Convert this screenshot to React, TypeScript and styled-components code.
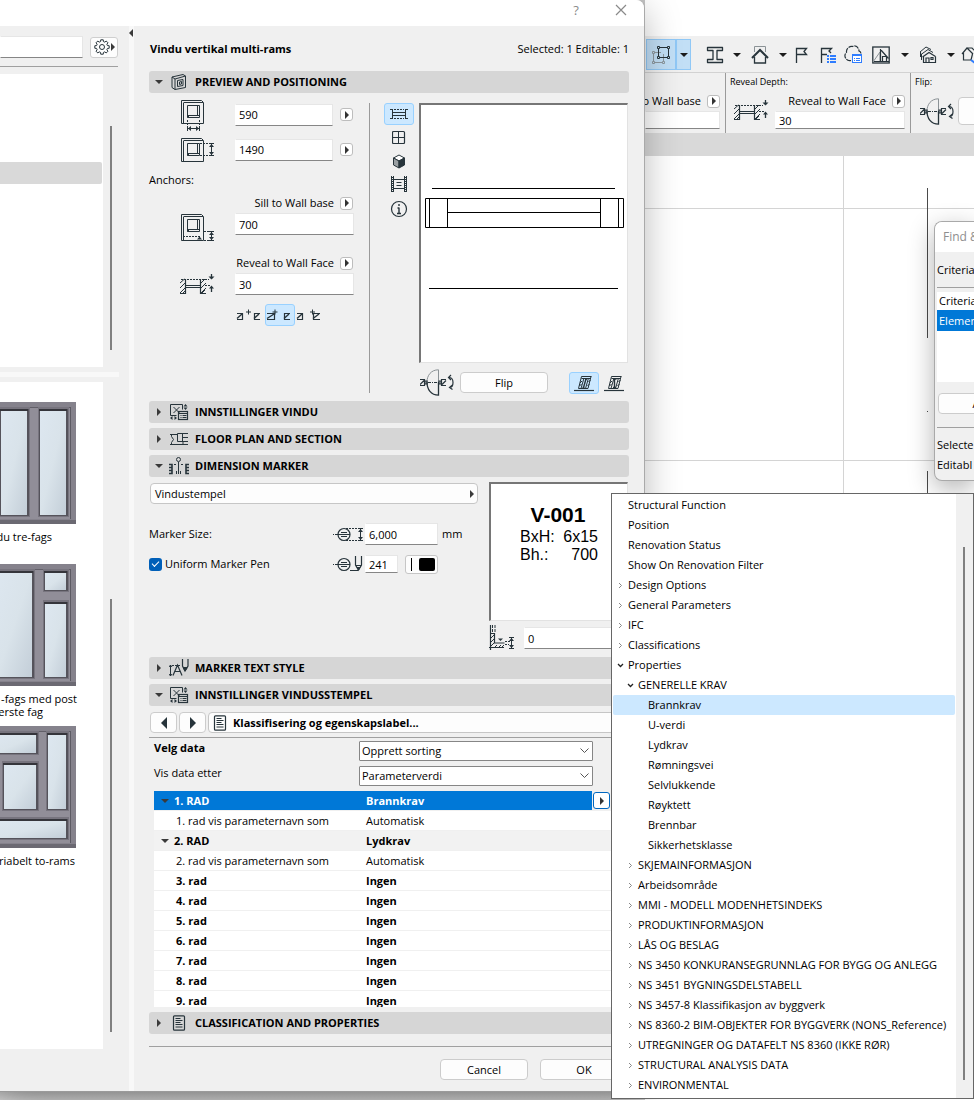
import React, { ReactNode } from "react";
import styled, { createGlobalStyle, css } from "styled-components";

const INK = "#27343b";
const BG = "#f0f0f0";

const GlobalStyle = createGlobalStyle`
  * { box-sizing: border-box; }
  body {
    margin: 0;
    background: #c4c4c4;
    font-family: "Open Sans", "Noto Sans", sans-serif;
    font-size: 11px;
    line-height: 14px;
    color: #000;
  }
  button, input, select { font: inherit; color: inherit; margin: 0; }
  button { padding: 0; }
  svg { display: block; flex: none; }
`;

/* ---------- windows ---------- */

const Screen = styled.div`
  position: relative;
  display: grid;
  grid-template-columns: minmax(645px, 1fr) 329px;
  min-height: 100vh;
  overflow: hidden;
  background: linear-gradient(#c4c4c4, #c4c4c4 1092px, #b8b8b8 1092px, #cdcdcd 1100px);
`;

const Dialog = styled.section`
  position: relative;
  z-index: 1;
  align-self: start;
  display: flex;
  flex-direction: column;
  background: ${BG};
  border-right: 1px solid #a9a9a9;
  border-bottom: 1px solid #9a9a9a;
  border-top-right-radius: 8px;
  box-shadow: 0 10px 36px rgba(0, 0, 0, 0.28);
`;

const TitleBar = styled.header`
  display: flex;
  justify-content: flex-end;
  gap: 25px;
  height: 26px;
  padding-right: 13px;
  background: #fff;
  border-top-right-radius: 8px;
`;

const TitleButton = styled.button`
  display: grid;
  place-items: center;
  width: 20px;
  height: 20px;
  border: 0;
  background: none;
  color: #8a8a8a;
  font-size: 13px;
`;

const DialogBody = styled.div`
  display: flex;
`;

const Sidebar = styled.aside`
  display: flex;
  flex-direction: column;
  flex: none;
  width: 129px;
`;

const SearchRow = styled.div`
  display: flex;
  justify-content: space-between;
  align-items: center;
  width: 118px;
  height: 41px;
  padding-top: 2px;
  border-bottom: 1px solid #a0a0a0;
`;

const GearButton = styled.button`
  display: flex;
  align-items: center;
  justify-content: center;
  gap: 1px;
  width: 28px;
  height: 21px;
  border: 1px solid #cfcfcf;
  border-radius: 3px;
  background: #fdfdfd;
`;

const ListPane = styled.div<{ $height?: number }>`
  display: flex;
  justify-content: space-between;
  width: 112px;
  ${(p) => (p.$height ? `height: ${p.$height}px;` : "flex: 1; margin-bottom: 42px;")}
`;

const Sheet = styled.div`
  width: 103px;
  overflow: hidden;
  background: #fff;
`;

const TreeSelection = styled.div`
  width: 102px;
  height: 22px;
  margin-top: 88px;
  border-radius: 0 2px 2px 0;
  background: #d9d9d9;
`;

const ScrollThumb = styled.div<{ $top: number; $bottom: number }>`
  width: 2px;
  margin: ${(p) => p.$top}px 0 ${(p) => p.$bottom}px;
  background: #808080;
`;

const PaneSplitter = styled.div`
  width: 119px;
  height: 5px;
  margin: 5px 0;
  background: #f8f8f8;
`;

const ColumnSplitter = styled.div`
  flex: none;
  width: 5px;
  background: #f8f8f8;
`;

const CollapseButton = styled.button`
  position: absolute;
  top: 29px;
  left: 129px;
  border: 0;
  background: none;
`;

const Thumb = styled.figure`
  height: 162px;
  margin: 0;
  svg { width: 76px; height: 122px; }
`;

const Caption = styled.figcaption<{ $end: number }>`
  display: flex;
  justify-content: flex-end;
  width: ${(p) => p.$end}px;
  line-height: 13px;
  white-space: nowrap;
`;

const Captions = styled.div`
  padding-top: 6px;
`;

const Content = styled.main`
  flex: 1;
  min-width: 0;
  padding: 0 15px 0 15px;
`;

const InfoRow = styled.div`
  display: flex;
  align-items: center;
  justify-content: space-between;
  height: 45px;
  padding-left: 1px;
`;

/* ---------- controls ---------- */

const SectionButton = styled.button`
  display: grid;
  grid-template-columns: 14px 26px 1fr;
  align-items: center;
  width: 100%;
  height: 22px;
  padding-left: 6px;
  border: 0;
  border-radius: 3px;
  background: #d6d6d6;
  font-weight: 700;
  text-align: left;
`;

const SectionGap = styled.div`
  height: 5px;
`;

const TextField = styled.input<{ $width?: number; $height?: number }>`
  ${(p) => (p.$width ? `width: ${p.$width}px;` : "flex: 1; min-width: 0; width: 100%;")}
  height: ${(p) => p.$height ?? 22}px;
  padding: 0 3px;
  border: 1px solid #e6e6e6;
  border-left-color: #fff;
  border-bottom-color: #868686;
  border-radius: 0;
  outline: 0;
  background: #fff;
`;

const ArrowButton = styled.button<{ $active?: boolean }>`
  display: grid;
  place-items: center;
  flex: none;
  width: ${(p) => (p.$active ? 17 : 13)}px;
  height: ${(p) => (p.$active ? 17 : 13)}px;
  border: 1px solid ${(p) => (p.$active ? "#0067c0" : "#bdbdbd")};
  border-radius: 3px;
  background: #fff;
`;

const PushButton = styled.button<{ $width?: number }>`
  display: flex;
  align-items: center;
  justify-content: center;
  flex: none;
  width: ${(p) => p.$width ?? 88}px;
  height: 21px;
  border: 1px solid #cccccc;
  border-radius: 4px;
  background: #fdfdfd;
`;

const WideButton = styled.button<{ $bold?: boolean }>`
  display: flex;
  align-items: center;
  flex: 1;
  gap: 7px;
  width: 100%;
  height: 21px;
  padding: 0 3px 0 4px;
  border: 1px solid #c6c6c6;
  border-radius: 4px;
  background: #fdfdfd;
  font-weight: ${(p) => (p.$bold ? 700 : 400)};
  > span { flex: 1; text-align: left; }
`;

const Toggle = styled.button<{ $on?: boolean; $tall?: boolean }>`
  display: grid;
  place-items: center;
  width: 30px;
  height: ${(p) => (p.$tall ? 24 : 22)}px;
  border: 1px solid ${(p) => (p.$on ? "#99d1ff" : "transparent")};
  border-radius: 3px;
  background: ${(p) => (p.$on ? "#cce8ff" : "transparent")};
`;

/* ---------- preview and positioning ---------- */

const PreviewBody = styled.div`
  display: flex;
  height: 308px;
`;

const FormColumn = styled.div`
  flex: none;
  width: 220px;
  padding-top: 4px;
`;

const Divider = styled.div`
  width: 1px;
  margin: 10px 0 8px;
  background: #9a9a9a;
`;

const SizeRow = styled.label`
  display: grid;
  grid-template-columns: 86px 98px 1fr;
  align-items: center;
  height: 35px;
  > svg { margin-left: 31px; }
  > button { margin-left: 7px; }
`;

const AnchorsLabel = styled.div`
  height: 26px;
  line-height: 26px;
`;

const AnchorGroup = styled.div<{ $height: number }>`
  display: grid;
  grid-template: 20px 22px / 86px 119px;
  height: ${(p) => p.$height}px;
  > svg { grid-area: 2 / 1; margin-left: 31px; }
  > input { grid-area: 2 / 2; }
`;

const AnchorLabel = styled.div`
  grid-area: 1 / 2;
  display: flex;
  align-items: center;
  justify-content: flex-end;
  gap: 6px;
  padding-right: 1px;
  white-space: nowrap;
`;

const ToggleRow = styled.div<{ $indent?: number }>`
  display: flex;
  margin-left: ${(p) => p.$indent ?? 0}px;
`;

const ViewTools = styled.div`
  display: flex;
  flex-direction: column;
  flex: none;
  padding: 10px 5px 0 14px;
`;

const PreviewColumn = styled.div`
  flex: 1;
  min-width: 0;
  padding-top: 10px;
`;

const SunkenFrame = styled.div<{ $height: number }>`
  height: ${(p) => p.$height}px;
  margin-right: 1px;
  border: solid #767676;
  border-width: 2px 1px 1px 2px;
  border-right-color: #e2e2e2;
  border-bottom-color: #e2e2e2;
  background: #fff;
  overflow: hidden;
  > svg { width: 100%; height: 100%; }
`;

const FlipRow = styled.div`
  display: flex;
  align-items: center;
  height: 27px;
  margin-top: 6px;
  padding-left: 1px;
  > svg { margin-right: 5px; }
  > div { margin-left: auto; }
`;

/* ---------- dimension marker ---------- */

const MarkerBody = styled.div`
  display: flex;
  gap: 11px;
  height: 180px;
  padding-top: 5px;
`;

const MarkerForm = styled.div`
  flex: 1;
  padding: 1px 0 15px 1px;
  > button { margin-bottom: 15px; }
`;

const MarkerRow = styled.div`
  display: flex;
  align-items: center;
  height: 30px;
  margin-left: -1px;
  > label:first-child { display: flex; align-items: center; gap: 3px; width: 184px; }
`;

const CheckBox = styled.input`
  display: grid;
  place-items: center;
  appearance: none;
  width: 13px;
  height: 13px;
  border-radius: 3px;
  background: #005fb8;
  &::after {
    content: "";
    width: 6px;
    height: 3px;
    margin-top: -2px;
    border: solid #fff;
    border-width: 0 0 1px 1px;
    transform: rotate(-45deg);
  }
`;

const Unit = styled.span`
  margin-left: 4px;
`;

const PenButton = styled.button`
  display: flex;
  align-items: center;
  gap: 7px;
  width: 33px;
  height: 19px;
  margin-left: 7px;
  padding: 0 2px 0 5px;
  border: 1px solid #c6c6c6;
  border-radius: 3px;
  background: #fdfdfd;
`;

const PenLine = styled.span`
  width: 1px;
  height: 13px;
  background: #000;
`;

const PenColor = styled.span`
  flex: 1;
  height: 13px;
  border-radius: 2px;
  background: #000;
`;

const MarkerSide = styled.div`
  flex: none;
  width: 140px;
`;

const StampText = styled.div`
  padding: 18px 0 0 29px;
  font-family: "Liberation Sans", Arial, sans-serif;
  font-size: 16px;
  line-height: 18px;
`;

const StampTitle = styled.div`
  width: 76px;
  padding-bottom: 1px;
  font-size: 21px;
  line-height: 25px;
  font-weight: 700;
  text-align: center;
`;

const StampLine = styled.div`
  display: flex;
  justify-content: space-between;
  width: 78px;
`;

const SillRow = styled.label`
  display: flex;
  align-items: center;
  gap: 9px;
  height: 28px;
  margin-top: 3px;
  padding-right: 1px;
`;

/* ---------- stamp settings ---------- */

const NavRow = styled.div`
  display: flex;
  gap: 2px;
  height: 32px;
  padding: 6px 1px 0;
  border-bottom: 1px solid #a0a0a0;
`;

const OptionRow = styled.div<{ $bold?: boolean }>`
  display: flex;
  align-items: flex-start;
  height: 25px;
  padding-left: 5px;
  > label {
    width: 205px;
    line-height: 20px;
    font-weight: ${(p) => (p.$bold ? 700 : 400)};
  }
`;

const SelectBox = styled.div`
  position: relative;
  width: 234px;
  margin-top: 3px;
  > svg { position: absolute; top: 7px; right: 4px; pointer-events: none; }
`;

const Select = styled.select`
  appearance: none;
  display: block;
  width: 100%;
  height: 20px;
  padding: 0 2px;
  border: 1px solid #868686;
  border-radius: 1px;
  background: #fff;
`;

const TableFrame = styled.div`
  height: 216px;
  margin: 3px 1px 0 5px;
  overflow: hidden;
`;

const Table = styled.table`
  width: 100%;
  table-layout: fixed;
  border-spacing: 0;
`;

const KeyCol = styled.col`
  width: 212px;
`;
const ValueCol = styled.col`
  width: 226px;
`;

const Row = styled.tr<{ $kind: "selected" | "group" | "plain"; $bold: boolean }>`
  height: 20px;
  font-weight: ${(p) => (p.$bold ? 700 : 400)};
  td {
    height: 20px;
    padding: 0;
    line-height: 19px;
    border-bottom: 1px solid #f0f0f0;
    background: ${(p) => (p.$kind === "group" ? "#f2f2f2" : "#fff")};
    ${(p) =>
      p.$kind === "selected" &&
      css`
        color: #fff;
        background: #0078d7;
        &:last-child { background: ${BG}; padding-left: 1px; }
      `}
  }
`;

const KeyCell = styled.div<{ $indent?: boolean }>`
  display: flex;
  align-items: center;
  gap: 5px;
  padding-left: ${(p) => (p.$indent ? 22 : 7)}px;
`;

const Footer = styled.footer`
  display: flex;
  justify-content: flex-end;
  gap: 12px;
  height: 45px;
  margin-top: 12px;
  padding: 12px 1px 0 0;
  border-top: 1px solid #a0a0a0;
`;

/* ---------- drawing application behind the dialog ---------- */

const AppWindow = styled.section`
  display: flex;
  flex-direction: column;
  min-width: 0;
  overflow: hidden;
  padding-top: 36px;
  background: #fff;
`;

const ToolStrip = styled.div`
  display: flex;
  align-items: center;
  height: 37px;
  padding: 1px 0 0 1px;
  background: ${BG};
  border-bottom: 1px solid #d2d2d2;
`;

const Tool = styled.button<{ $w: number; $on?: boolean }>`
  display: grid;
  place-items: center;
  flex: none;
  width: ${(p) => p.$w}px;
  height: 31px;
  overflow: hidden;
  border: ${(p) => (p.$on ? "1px solid #90c8f6" : "0")};
  background: ${(p) => (p.$on ? "#c2dff6" : "none")};
`;

const StripRule = styled.div`
  width: 1px;
  height: 28px;
  margin: 0 11px 0 2px;
  background: #9a9a9a;
`;

const InfoBar = styled.div`
  display: flex;
  height: 60px;
  background: ${BG};
`;

const InfoCell = styled.div<{ $w?: number }>`
  display: grid;
  align-content: start;
  flex: ${(p) => (p.$w ? "none" : "1")};
  ${(p) => p.$w && `width: ${p.$w}px;`}
  overflow: hidden;
  border-right: ${(p) => (p.$w ? "1px solid #9a9a9a" : "0")};
`;

const InfoTitle = styled.div`
  height: 18px;
  padding-left: 4px;
  font-size: 9px;
  line-height: 18px;
`;

const InfoControls = styled.div`
  display: grid;
  grid-template-columns: auto minmax(0, 1fr);
  gap: 5px;
  padding: 0 5px 0 8px;
  > svg { align-self: center; }
`;

const InfoStack = styled.div`
  display: flex;
  flex-direction: column;
  min-width: 0;
  > input { flex: none; }
`;

const InfoLabel = styled.div`
  display: flex;
  align-items: center;
  justify-content: flex-end;
  gap: 6px;
  height: 20px;
  white-space: nowrap;
`;

const InfoLabelEnd = styled(InfoLabel)`
  width: 75px;
`;

const FlipControls = styled.div`
  display: flex;
  align-items: center;
  gap: 3px;
  padding: 6px 0 0 9px;
`;

const FlipBox = styled(PushButton)`
  height: 28px;
`;

const TabBar = styled.div`
  height: 23px;
  background: #d9d9d9;
`;

const Canvas = styled.svg`
  width: 100%;
  height: 943px;
`;

const Palette = styled.section`
  position: absolute;
  z-index: 2;
  top: 221px;
  right: 0;
  width: 40px;
  overflow: hidden;
  border: 1px solid #a9a9a9;
  border-right: 0;
  border-radius: 8px 0 0 8px;
  background: ${BG};
  box-shadow: 0 8px 26px rgba(0, 0, 0, 0.3);
  white-space: nowrap;
`;

const PaletteTitle = styled.div`
  height: 30px;
  padding-left: 8px;
  background: #fff;
  color: #8e8e8e;
  font-size: 12px;
  line-height: 30px;
`;

const PaletteText = styled.div<{ $height: number }>`
  height: ${(p) => p.$height}px;
  padding-left: 2px;
  line-height: ${(p) => p.$height}px;
`;

const PaletteRule = styled.div`
  height: 1px;
  margin-left: 2px;
  background: #a0a0a0;
`;

const PaletteList = styled.div`
  height: 90px;
  margin: 4px 0 11px 2px;
  background: #fff;
`;

const PaletteItem = styled.div<{ $on?: boolean }>`
  height: ${(p) => (p.$on ? 21 : 18)}px;
  padding-left: 2px;
  line-height: ${(p) => (p.$on ? 21 : 18)}px;
  color: ${(p) => (p.$on ? "#fff" : "#000")};
  background: ${(p) => (p.$on ? "#0078d7" : "none")};
`;

const PaletteButton = styled.div`
  margin: 0 0 13px 3px;
`;

const PaletteStatus = styled.div`
  padding: 7px 0 5px;
`;

/* ---------- popup tree ---------- */

const Popup = styled.nav`
  position: absolute;
  z-index: 3;
  top: 493px;
  right: 0;
  display: flex;
  width: 363px;
  border: 1px solid #666;
  background: ${BG};
`;

const Tree = styled.ul`
  flex: 1;
  margin: 0;
  padding: 1px 1px 3px;
  list-style: none;
  background: #fff;
`;

const TreeButton = styled.button<{ $level: number; $on?: boolean }>`
  display: flex;
  align-items: center;
  gap: 4px;
  width: 100%;
  height: 20px;
  padding-left: ${(p) => 4 + p.$level * 10}px;
  border: 0;
  border-radius: 2px;
  background: ${(p) => (p.$on ? "#cce8ff" : "none")};
  text-align: left;
  white-space: nowrap;
`;

const LeafSpacer = styled.span`
  width: 7px;
`;

const PopupScroll = styled.div`
  width: 17px;
  padding: 53px 8px 18px 7px;
`;

const PopupThumb = styled.div`
  width: 2px;
  height: 100%;
  background: #808080;
`;

/* ---------- glyphs ---------- */

type Dir = "left" | "right" | "down";

const Tri = ({ dir, size = 4, fill = "#3a3a3a" }: { dir: Dir; size?: number; fill?: string }) => {
  const w = dir === "down" ? size * 2 : size;
  const h = dir === "down" ? size : size * 2;
  const d =
    dir === "down" ? `M0 0H${w}L${size} ${h}Z` : dir === "right" ? `M0 0V${h}L${w} ${size}Z` : `M${w} 0V${h}L0 ${size}Z`;
  return (
    <svg width={w} height={h} viewBox={`0 0 ${w} ${h}`} aria-hidden="true">
      <path d={d} fill={fill} />
    </svg>
  );
};

const Icon = ({ w, h, children, stroke = INK }: { w: number; h: number; children: ReactNode; stroke?: string }) => (
  <svg width={w} height={h} viewBox={`0 0 ${w} ${h}`} fill="none" stroke={stroke} aria-hidden="true">
    {children}
  </svg>
);

const Chevron = ({ open }: { open?: boolean }) => (
  <svg width="7" height="7" viewBox="0 0 7 7" fill="none" stroke={open ? "#222" : "#888"} aria-hidden="true">
    <path d={open ? "M1 2l2.500 2.500L6 2" : "M2 1l2.500 2.500L2 6"} strokeWidth={open ? 1.3 : 1} />
  </svg>
);

const SelectChevron = () => (
  <Icon w={9} h={6} stroke="#555">
    <path d="M.5.5l4 4 4-4" />
  </Icon>
);

const Frame = ({ h = 23 }: { h?: number }) => (
  <>
    <path d={`M1.500 1.500H21.500L23.500 3.500V${h + 1.5}H1.500ZM3.500 4V${h + 1}M3.500 3.500H23`} />
    <path d="M7.500 6.500H19.500V18.500H7.500ZM17.500 7V16.500M8 16.500H19M7.500 18.500l2-2" />
  </>
);

const VArrow = ({ x, y1, y2 }: { x: number; y1: number; y2: number }) => (
  <>
    <path d={`M${x} ${y1}V${y2}M${x - 2.5} ${y1}h5M${x - 2.5} ${y2}h5`} />
    <path
      d={`M${x - 2.5} ${y1 + 3.5}L${x} ${y1 + 0.5}L${x + 2.5} ${y1 + 3.5}ZM${x - 2.5} ${y2 - 3.5}L${x} ${y2 - 0.5}L${x + 2.5} ${y2 - 3.5}Z`}
      fill={INK}
      stroke="none"
    />
  </>
);

const WidthIcon = () => (
  <Icon w={36} h={32}>
    <Frame />
    <path d="M7.500 21v6M19.500 21v6" strokeDasharray="2 1" />
    <path d="M7.500 29.500h12M7.500 27v5M19.500 27v5" />
    <path d="M11 27L8 29.500l3 2.500zM16 27l3 2.500-3 2.500z" fill={INK} stroke="none" />
  </Icon>
);

const HeightIcon = () => (
  <Icon w={36} h={26}>
    <Frame />
    <path d="M20 6.500h11M20 18.500h11" strokeDasharray="2 1" />
    <VArrow x={31.5} y1={6.5} y2={18.5} />
  </Icon>
);

const SillIcon = () => (
  <Icon w={36} h={30}>
    <Frame h={26} />
    <path d="M3 23.500h18M24 18.500h8M24 27.500h8" strokeDasharray="2 1" />
    <path d="M17 26.500l2.500-3 2.500 3z" fill={INK} stroke="none" />
    <VArrow x={31.5} y1={18.5} y2={27.5} />
  </Icon>
);

const RevealIcon = () => (
  <Icon w={36} h={22}>
    <path d="M5.500 6v15M20.500 6v15" strokeWidth="1.200" />
    <path d="M0 10l4.500-4M0 15l5-5M0 20l5-5M2 21l3-3M21 10l4-4M21 15l5-5M21 20l5-5M21 21l4-4M0 20.500h5M21 20.500h5" />
    <path d="M6 12.500h14M6 14.500h14" />
    <path d="M1 6.500h28M25 12.500h5" strokeDasharray="2 1" />
    <path d="M31.500 1v4M31.500 15v4" strokeWidth="1.300" />
    <path d="M28.500 3.500h6l-3 3zM29 15.500h5l-2.500-3z" fill={INK} stroke="none" />
  </Icon>
);

/* Cut wall piece: the open side faces the window, on the left or the right. */
const Block = ({ x, w = 6, open = "left" }: { x: number; w?: number; open?: "left" | "right" }) => (
  <>
    <path
      d={`M${x} 8.500h${w}M${x} 14.500h${w}M${open === "left" ? x + w - 0.5 : x + 0.5} 8v7`}
      strokeWidth="1.200"
    />
    <path d={`M${x} 13.500l${w - 1}-4.500`} strokeWidth="1.400" />
  </>
);

const AnchorIcon = ({ a, plus, b, wa = 6, wb = 6 }: { a: number; plus: number; b: number; wa?: number; wb?: number }) => (
  <Icon w={28} h={20}>
    <Block x={a} w={wa} />
    <Block x={b} w={wb} open="right" />
    <path d={`M${plus} 4.500v5M${plus - 2.5} 7h5`} />
  </Icon>
);

const FlipIcon = () => (
  <Icon w={35} h={27}>
    <path d="M18.500 13V.8C11 .8 7 6.500 7 13" stroke="#8b9296" />
    <path d="M7 13c0 7.500 4 13.200 11.500 13.200V13" strokeWidth="1.300" />
    <path d="M8 13.500h11" strokeDasharray="3 1 1 1" />
    <path d="M0 10.500h4.500v6H0M0 15.500l4-4M5 12h2v3H5ZM26 10.500h-4.500v6h4.500M22 15.500l4-4M19 12h2v3h-2Z" strokeWidth="1.200" />
    <path d="M29 8.500c3 0 4 1.500 4 5s-1.500 5-3.500 5M31 6L28.500 8.500 31 11M32.500 16L29.500 18.500l3 2" strokeWidth="1.200" />
  </Icon>
);

const SlantIcon = ({ thick }: { thick?: boolean }) => (
  <Icon w={22} h={18}>
    <path d="M1 16.500h20" strokeWidth="1.200" />
    <path d="M5.500 14.500L8.500 2.500M8 14.500L11 4M12.500 14.500L15.500 4M15 14.500L18 2.500M5.500 14.500h9.500" />
    <path d={thick ? "M11.500 13.500V5M10 13.500h3M10.500 5h3" : "M10.500 13.500L13 5M9.500 13.500h2M12 5h2"} strokeWidth="1.400" />
    <path d="M8.500 2.500h10M8.500 4.500h9" />
    <path d="M6.500 12l2-2M7 9l2-2M14.500 12l2-2M15.500 8l2-2" />
  </Icon>
);

const PlanViewIcon = () => (
  <Icon w={20} h={12}>
    <path d="M1 1.500h3M1 10.500h3M16 1.500h3M16 10.500h3M3.500 1.500v9M16.500 1.500v9M4 4.500h12M4 7.500h12" />
    <path d="M5 1.500h10M5 10.500h10" strokeDasharray="2 1" />
  </Icon>
);
const ElevationIcon = () => (
  <Icon w={14} h={14}>
    <rect x=".5" y="1.500" width="12" height="12" rx="1" strokeWidth="1.200" />
    <path d="M6.500 2v12M1 7.500h12" />
  </Icon>
);
const CubeIcon = () => (
  <Icon w={14} h={15}>
    <path d="M7 1l5.500 3L7 7 1.500 4z" fill="#fff" />
    <path d="M1.500 4L7 7v7l-5.500-3z" fill="#9aa0a3" />
    <path d="M12.500 4L7 7v7l5.500-3z" fill={INK} />
  </Icon>
);
const FilmIcon = () => (
  <Icon w={18} h={18}>
    <path d="M1.500 0v16M3.500 0v16M14.500 0v16M16.500 0v16" />
    <path d="M2.500 1v15M15.500 1v15" strokeWidth="2" strokeDasharray="1 1" />
    <path d="M4 3.500h10M4 12.500h10M6.500 6.500h5M6.500 9.500h5" />
  </Icon>
);
const InfoIcon = () => (
  <Icon w={18} h={18}>
    <circle cx="9" cy="9" r="7.500" strokeWidth="1.200" />
    <path d="M9 4v2M9 7.500v6M7.500 8H9M7 13.500h4" strokeWidth="1.400" />
  </Icon>
);

/* Eight-toothed cog outline around the centre (8, 8). */
const cogPath = Array.from({ length: 8 }, (_, i) =>
  [
    [-15, 5.6],
    [-10, 7.3],
    [10, 7.3],
    [15, 5.6],
  ]
    .map(([offset, r]) => {
      const a = ((i * 45 + offset) * Math.PI) / 180;
      return `${(8 + r * Math.cos(a)).toFixed(2)} ${(8 + r * Math.sin(a)).toFixed(2)}`;
    })
    .join("L")
).join("L");

const GearIcon = () => (
  <Icon w={16} h={16}>
    <circle cx="8" cy="8" r="2.500" />
    <path d={`M${cogPath}Z`} strokeLinejoin="round" />
  </Icon>
);

const PreviewIcon = () => (
  <Icon w={20} h={18}>
    <path d="M3 4L14 1.500l2.500 1.500v11.500L6 16.500 3 14.500zM3 4L6 6v10.500M6 6l10.500-3" />
    <path d="M8.500 7.500L14 6.500v6L8.500 13.500zM10.500 9l2-.5v2.500l-2 .5z" />
  </Icon>
);
const SettingsIcon = () => (
  <Icon w={20} h={18}>
    <path d="M7.500 12.500h-6v-11h12v5M4.500 4l6 6M10.500 4l-6 6" />
    <rect x="9.500" y="8.500" width="9" height="8" strokeWidth="1.200" />
    <path d="M10 10.500h8M11.500 12.500h1M13.500 12.500h4M11.500 14.500h1M13.500 14.500h4" />
    <path d="M14.500 3.500l2-2.500 2 2.500zM14.500 4.500l2 2.500 2-2.500zM3.500 13l-2.500 2 2.500 2zM5.500 13l2.500 2-2.500 2z" fill={INK} stroke="none" />
  </Icon>
);
const PlanIcon = () => (
  <Icon w={20} h={16}>
    <path d="M1 3.500h7M1 13.500h18M2.500 3.500v2l2 3-2 3v2M8.500 10.500v-8H19M8.500 10.500H14v3M13.500 2.500v8M13.500 6.500H19M13.500 10.500H19" />
  </Icon>
);
const MarkerIcon = () => (
  <Icon w={21} h={18}>
    <circle cx="9.500" cy="2.500" r="2" />
    <path d="M9.500 5v12M5 7.500h2M12 7.500h2M7.500 14v3M11.500 14v3" />
    <path d="M0 7.500h3v9H0M0 10.500h3M0 13.500h3M20 7.500h-3v9h3M17 10.500h3M17 13.500h3" strokeWidth="1.600" />
  </Icon>
);
const TextStyleIcon = () => (
  <Icon w={21} h={18}>
    <path d="M1.500 6v11M0 8l1.500-2L3 8M0 15l1.500 2L3 15" />
    <path d="M3 6.500h8" strokeDasharray="2 1" />
    <path d="M4 16.500L8.500 6 13 16.500M5.500 12.500h6M13.500 0v7l2.500 5 3-5V0M14 8.500h4" strokeWidth="1.200" />
    <path d="M14.500 9h3.500L16 12z" fill={INK} />
  </Icon>
);
const PageIcon = () => (
  <Icon w={20} h={16}>
    <rect x="4.500" y=".8" width="11" height="14.400" rx="1" strokeWidth="1.200" />
    <path d="M6.500 3.500h5M6.500 5.500h7M6.500 7.500h5M6.500 9.500h7M6.500 12h7" />
  </Icon>
);

const MarkerGlyph = () => (
  <>
    <path d="M0 9.500h3" strokeDasharray="1 1" />
    <path d="M3 9.500h14M8 7.500h6M8 11.500h6" />
    <circle cx="11" cy="9.500" r="6" strokeWidth="1.200" />
  </>
);
const MarkerSizeIcon = () => (
  <Icon w={32} h={18}>
    <MarkerGlyph />
    <path d="M13 3.500h12M13 15.500h12" strokeDasharray="2 1" />
    <VArrow x={27.5} y1={3.5} y2={15.5} />
  </Icon>
);
const MarkerPenIcon = () => (
  <Icon w={32} h={18}>
    <MarkerGlyph />
    <path d="M22.500 1v9l3 5 3-5V1M23 10.500h5M17 15.500h8" strokeWidth="1.200" />
    <path d="M24 12.500h3l-1.500 2.500z" fill={INK} />
  </Icon>
);
const SillHeightIcon = () => (
  <Icon w={26} h={26}>
    <path d="M1.500 0v25M5.500 8v10h10M0 22.500h15" strokeWidth="1.200" />
    <path d="M3.500 0v7M6 0v7" strokeDasharray="3 1" />
    <path d="M2 13l3-3M2 17l3-3M2 21l3-3M5 23l3-3M9 23l3-3M12 23l3-3M2 8.500h4" />
    <path d="M9 13.500h5l-2.500 2.500z" fill={INK} stroke="none" />
    <path d="M16 16.500h6M16 19.500h4" strokeDasharray="2 1" />
    <VArrow x={22.5} y1={12.5} y2={23.5} />
  </Icon>
);

/* ---------- toolbar glyphs ---------- */

const SelectionIcon = () => (
  <Icon w={20} h={20}>
    <g stroke="#8d989f">
      <path d="M4 7.500h6M2.500 9v7M4 17.500h7M12.500 9v7" />
      <path d="M1.500 6.500h2v2h-2zM1.500 16.500h2v2h-2zM11.500 16.500h2v2h-2z" />
    </g>
    <path d="M8 2.500h8M7.500 4v7M8 12.500h8M17.500 4v7" />
    <path d="M6.500 1.500h2v2h-2zM16.500 1.500h2v2h-2zM6.500 11.500h2v2h-2zM16.500 11.500h2v2h-2z" />
  </Icon>
);
const BeamIcon = () => (
  <Icon w={18} h={18}>
    <path d="M1.500 1.500h15v3h-5.500v9h5.500v3h-15v-3H7v-9H1.500z" strokeWidth="1.300" strokeLinejoin="round" />
  </Icon>
);
const HouseIcon = () => (
  <Icon w={18} h={18}>
    <path d="M3.500 6V.5h11V6" stroke="#8b9296" />
    <path d="M1 12l8-8 8 8" strokeWidth="2" />
    <path d="M3.500 11v6h11v-6" strokeWidth="1.300" />
  </Icon>
);
const FlagIcon = () => (
  <Icon w={18} h={18}>
    <path d="M1.500 17V2.500h10L9 5.500l2.500 3h-10" strokeWidth="1.300" />
  </Icon>
);
const FlagListIcon = () => (
  <Icon w={18} h={18}>
    <path d="M2.500 17V2.500h10L10 5l2 2M2.500 8.500H8" strokeWidth="1.300" />
    <path d="M8 10h2M11 10h6M8 13h2M11 13h6M8 16h2M11 16h6" stroke="#2f7dff" strokeWidth="2" />
  </Icon>
);
const CloudIcon = () => (
  <Icon w={18} h={19}>
    <path d="M7 15.500C2 17 -1 10 2.500 7.500 2 3 6 1 8.500 1.500 12 -.5 15 3 15 6c1.500.5 2 1.500 2 3" strokeDasharray="5 1" strokeWidth="1.200" />
    <rect x="8.500" y="9.500" width="9" height="8" fill="#fff" stroke="#2f7dff" />
    <path d="M8 10.500h10M10 13.500h1M12 13.500h4M10 15.500h1M12 15.500h4" stroke="#2f7dff" />
  </Icon>
);
const PictureIcon = () => (
  <Icon w={18} h={18}>
    <rect x=".8" y="1" width="16.400" height="16" strokeWidth="1.300" />
    <path d="M1 16L8 6v10" stroke="#8b9296" />
    <path d="M8.500 3v13M8.500 3.500l8 9M10.500 15.500v-5h4v5M2 15.500h15" strokeWidth="1.200" />
  </Icon>
);
const HousesIcon = () => (
  <Icon w={18} h={18}>
    <path d="M1 6l6-5L12 3.500M1.500 6v5M2 8.500L9 3.500l5 3M2.500 8v6" />
    <path d="M3.500 11L10 6.500l6.500 4M4.500 10.500v6h12v-6M7 16v-4h3v4M12 11.500h2v2h-2z" strokeWidth="1.200" />
  </Icon>
);
const HouseEditIcon = () => (
  <Icon w={16} h={18}>
    <path d="M1 8l5-6 6 6M2.500 7v7H10M6 2h5l5 5M10 14l1.500-6" strokeWidth="1.200" />
    <path d="M10 14l4 3 3-3" stroke="#2f7dff" strokeWidth="2" />
  </Icon>
);

/* ---------- window thumbnails ---------- */

type Pane = [number, number, number, number];

const WindowThumb = ({ id, panes }: { id: string; panes: Pane[] }) => (
  <svg width="76" height="122" viewBox="0 0 76 122" aria-hidden="true">
    <defs>
      <linearGradient id={id} x1="0" y1="0" x2="1" y2="1">
        <stop offset="0" stopColor="#dde7f0" />
        <stop offset="0.500" stopColor="#d9e3ea" />
        <stop offset="1" stopColor="#c3ced8" />
      </linearGradient>
    </defs>
    <rect width="76" height="122" fill="#85828c" />
    <rect y="5" width="70" height="112" fill="#918e98" />
    <path d="M0 5.500h70" stroke="#625f68" />
    <path d="M70.500 5v112" stroke="#5c5a63" />
    <path d="M0 120h76" stroke="#6b6972" strokeWidth="4" />
    {panes.map(([x, y, w, h]) => (
      <g key={`${x}-${y}`}>
        <rect x={x - 2} y={y - 4} width={w + 5} height={h + 6} fill="#77747e" />
        <rect x={x - 1} y={y - 2} width={w + 3} height={h + 3} fill="#55535b" />
        <rect x={x - 1} y={y - 2} width={w + 2} height="2" fill="#35353b" />
        <rect x={x} y={y} width={w} height={h} fill={`url(#${id})`} />
      </g>
    ))}
  </svg>
);

const THUMBS: { id: string; panes: Pane[]; captions: [string, number][] }[] = [
  { id: "g1", panes: [[1, 9, 26, 104], [40, 9, 26, 104]], captions: [["du tre-fags", 52]] },
  {
    id: "g2",
    panes: [[-4, 9, 36, 104], [45, 9, 21, 17], [45, 40, 21, 73]],
    captions: [["-fags med post", 77], ["erste fag", 43]],
  },
  {
    id: "g3",
    panes: [[-4, 9, 40, 18], [4, 39, 32, 44], [48, 9, 18, 74], [-4, 95, 70, 17]],
    captions: [["riabelt to-rams", 75]],
  },
];

/* ---------- data ---------- */

type RowData = { key: string; value: string; kind: "selected" | "group" | "plain"; bold: boolean };

const ROWS: RowData[] = [
  { key: "1. RAD", value: "Brannkrav", kind: "selected", bold: true },
  { key: "1. rad vis parameternavn som", value: "Automatisk", kind: "plain", bold: false },
  { key: "2. RAD", value: "Lydkrav", kind: "group", bold: true },
  { key: "2. rad vis parameternavn som", value: "Automatisk", kind: "plain", bold: false },
  ...[3, 4, 5, 6, 7, 8, 9].map((n): RowData => ({ key: `${n}. rad`, value: "Ingen", kind: "plain", bold: true })),
];

type Node = { text: string; level: number; state?: "open" | "closed"; on?: boolean };

const closed = (text: string, level: number): Node => ({ text, level, state: "closed" });
const leaf = (text: string, level: number): Node => ({ text, level });

const NODES: Node[] = [
  ...["Structural Function", "Position", "Renovation Status", "Show On Renovation Filter"].map((t) => leaf(t, 0)),
  ...["Design Options", "General Parameters", "IFC", "Classifications"].map((t) => closed(t, 0)),
  { text: "Properties", level: 0, state: "open" },
  { text: "GENERELLE KRAV", level: 1, state: "open" },
  { text: "Brannkrav", level: 2, on: true },
  ...["U-verdi", "Lydkrav", "Rømningsvei", "Selvlukkende", "Røyktett", "Brennbar", "Sikkerhetsklasse"].map((t) =>
    leaf(t, 2)
  ),
  ...[
    "SKJEMAINFORMASJON",
    "Arbeidsområde",
    "MMI - MODELL MODENHETSINDEKS",
    "PRODUKTINFORMASJON",
    "LÅS OG BESLAG",
    "NS 3450 KONKURANSEGRUNNLAG FOR BYGG OG ANLEGG",
    "NS 3451 BYGNINGSDELSTABELL",
    "NS 3457-8 Klassifikasjon av byggverk",
    "NS 8360-2 BIM-OBJEKTER FOR BYGGVERK (NONS_Reference)",
    "UTREGNINGER OG DATAFELT NS 8360 (IKKE RØR)",
    "STRUCTURAL ANALYSIS DATA",
    "ENVIRONMENTAL",
  ].map((t) => closed(t, 1)),
];

/* ---------- parts ---------- */

const Indent = styled.span`
  display: block;
  padding-left: 2px;
`;

const SidebarSpace = styled.div`
  height: 7px;
`;

const ThumbTop = styled.div`
  height: 20px;
`;

const PageIconBox = styled.i`
  display: flex;
  width: 16px;
  margin-left: -3px;
`;

const Section = ({ open, icon, children }: { open?: boolean; icon: ReactNode; children: string }) => (
  <SectionButton type="button" aria-expanded={!!open}>
    <span>{open ? <Tri dir="down" /> : <Indent><Tri dir="right" /></Indent>}</span>
    {icon}
    <span>{children}</span>
  </SectionButton>
);

const Arrow = ({ label, active }: { label: string; active?: boolean }) => (
  <ArrowButton type="button" aria-label={label} $active={active}>
    <Tri dir="right" fill="#333" />
  </ArrowButton>
);

const SidebarPanel = () => (
  <Sidebar>
    <SearchRow>
      <TextField $width={83} aria-label="Search" />
      <GearButton type="button" aria-label="Library settings">
        <GearIcon />
        <Tri dir="right" />
      </GearButton>
    </SearchRow>
    <SidebarSpace />
    <ListPane $height={293}>
      <Sheet>
        <TreeSelection />
      </Sheet>
      <ScrollThumb $top={52} $bottom={17} />
    </ListPane>
    <PaneSplitter />
    <ListPane>
      <Sheet>
        <ThumbTop />
        {THUMBS.map((t) => (
          <Thumb key={t.id}>
            <WindowThumb id={t.id} panes={t.panes} />
            <Captions>
              {t.captions.map(([text, end]) => (
                <Caption key={text} $end={end}>
                  {text}
                </Caption>
              ))}
            </Captions>
          </Thumb>
        ))}
      </Sheet>
      <ScrollThumb $top={217} $bottom={17} />
    </ListPane>
  </Sidebar>
);

const PreviewSection = () => (
  <PreviewBody>
    <FormColumn>
      <SizeRow>
        <WidthIcon />
        <TextField defaultValue="590" aria-label="Width" />
        <Arrow label="Width options" />
      </SizeRow>
      <SizeRow>
        <HeightIcon />
        <TextField defaultValue="1490" aria-label="Height" />
        <Arrow label="Height options" />
      </SizeRow>
      <AnchorsLabel>Anchors:</AnchorsLabel>
      <AnchorGroup $height={60}>
        <AnchorLabel>
          <label htmlFor="sill">Sill to Wall base</label>
          <Arrow label="Sill options" />
        </AnchorLabel>
        <SillIcon />
        <TextField id="sill" defaultValue="700" />
      </AnchorGroup>
      <AnchorGroup $height={51}>
        <AnchorLabel>
          <label htmlFor="reveal">Reveal to Wall Face</label>
          <Arrow label="Reveal options" />
        </AnchorLabel>
        <RevealIcon />
        <TextField id="reveal" defaultValue="30" />
      </AnchorGroup>
      <ToggleRow $indent={86}>
        <Toggle type="button" aria-label="Anchor left">
          <AnchorIcon a={1} plus={12.5} b={18} />
        </Toggle>
        <Toggle type="button" aria-label="Anchor centre" $on>
          <AnchorIcon a={1} plus={9} b={18} wa={8} />
        </Toggle>
        <Toggle type="button" aria-label="Anchor right">
          <AnchorIcon a={1} plus={16.5} b={17} wb={7} />
        </Toggle>
      </ToggleRow>
    </FormColumn>
    <Divider />
    <ViewTools>
      <Toggle type="button" aria-label="Plan view" $on>
        <PlanViewIcon />
      </Toggle>
      <Toggle type="button" aria-label="Front view" $tall>
        <ElevationIcon />
      </Toggle>
      <Toggle type="button" aria-label="3D view" $tall>
        <CubeIcon />
      </Toggle>
      <Toggle type="button" aria-label="Preview picture" $tall>
        <FilmIcon />
      </Toggle>
      <Toggle type="button" aria-label="Info" $tall>
        <InfoIcon />
      </Toggle>
    </ViewTools>
    <PreviewColumn>
      <SunkenFrame $height={260}>
        <svg viewBox="0 0 206 257" fill="none" stroke="#000" aria-hidden="true">
          <path d="M11 83.500h183M8 183.500h189" />
          <path d="M4.500 93.500h198v29h-198zM8.500 93.500v29M26.500 93.500v29M179.500 93.500v29M197.500 93.500v29M26.500 107.500h153" />
        </svg>
      </SunkenFrame>
      <FlipRow>
        <FlipIcon />
        <PushButton type="button">Flip</PushButton>
        <ToggleRow>
          <Toggle type="button" aria-label="Slanted frame" $on>
            <SlantIcon />
          </Toggle>
          <Toggle type="button" aria-label="Upright frame">
            <SlantIcon thick />
          </Toggle>
        </ToggleRow>
      </FlipRow>
    </PreviewColumn>
  </PreviewBody>
);

const MarkerSection = () => (
  <MarkerBody>
    <MarkerForm>
      <WideButton type="button">
        <span>Vindustempel</span>
        <Tri dir="right" />
      </WideButton>
      <MarkerRow>
        <label htmlFor="msize">Marker Size:</label>
        <MarkerSizeIcon />
        <TextField id="msize" $width={73} defaultValue="6,000" />
        <Unit>mm</Unit>
      </MarkerRow>
      <MarkerRow>
        <label>
          <CheckBox type="checkbox" defaultChecked />
          Uniform Marker Pen
        </label>
        <MarkerPenIcon />
        <TextField aria-label="Pen number" $width={33} $height={18} defaultValue="241" />
        <PenButton type="button" aria-label="Pen colour">
          <PenLine />
          <PenColor />
        </PenButton>
      </MarkerRow>
    </MarkerForm>
    <MarkerSide>
      <SunkenFrame $height={139}>
        <StampText>
          <StampTitle>V-001</StampTitle>
          <StampLine>
            <span>BxH:</span>
            <span>6x15</span>
          </StampLine>
          <StampLine>
            <span>Bh.:</span>
            <span>700</span>
          </StampLine>
        </StampText>
      </SunkenFrame>
      <SillRow>
        <SillHeightIcon />
        <TextField defaultValue="0" aria-label="Sill height" />
      </SillRow>
    </MarkerSide>
  </MarkerBody>
);

const StampSection = () => (
  <>
    <NavRow>
      <PushButton type="button" aria-label="Previous page" $width={27}>
        <Tri dir="left" size={6} fill={INK} />
      </PushButton>
      <PushButton type="button" aria-label="Next page" $width={27}>
        <Tri dir="right" size={6} fill={INK} />
      </PushButton>
      <WideButton type="button" $bold>
        <PageIconBox>
          <PageIcon />
        </PageIconBox>
        <span>Klassifisering og egenskapslabel...</span>
      </WideButton>
    </NavRow>
    <OptionRow $bold>
      <label htmlFor="velg">Velg data</label>
      <SelectBox>
        <Select id="velg">
          <option>Opprett sorting</option>
        </Select>
        <SelectChevron />
      </SelectBox>
    </OptionRow>
    <OptionRow>
      <label htmlFor="vis">Vis data etter</label>
      <SelectBox>
        <Select id="vis">
          <option>Parameterverdi</option>
        </Select>
        <SelectChevron />
      </SelectBox>
    </OptionRow>
    <TableFrame>
      <Table>
        <colgroup>
          <KeyCol />
          <ValueCol />
          <col />
        </colgroup>
        <tbody>
          {ROWS.map((r) => (
            <Row key={r.key} $kind={r.kind} $bold={r.bold}>
              <td>
                <KeyCell $indent={r.kind === "plain"}>
                  {r.kind !== "plain" && <Tri dir="down" />}
                  {r.key}
                </KeyCell>
              </td>
              <td>{r.value}</td>
              <td>{r.kind === "selected" && <Arrow label="Choose parameter" active />}</td>
            </Row>
          ))}
        </tbody>
      </Table>
    </TableFrame>
  </>
);

const Caret = ({ w, on }: { w: number; on?: boolean }) => (
  <Tool type="button" aria-label="More" $w={w} $on={on}>
    <Tri dir="down" fill="#1c1c1c" />
  </Tool>
);

const Background = () => (
  <AppWindow>
    <ToolStrip>
      <Tool type="button" aria-label="Selection" $w={30} $on>
        <SelectionIcon />
      </Tool>
      <Caret w={15} on />
      <StripRule />
      <Tool type="button" aria-label="Beam" $w={22}>
        <BeamIcon />
      </Tool>
      <Caret w={21} />
      <Tool type="button" aria-label="Roof" $w={26}>
        <HouseIcon />
      </Tool>
      <Caret w={20} />
      <Tool type="button" aria-label="Flag" $w={22}>
        <FlagIcon />
      </Tool>
      <Tool type="button" aria-label="Flag list" $w={25}>
        <FlagListIcon />
      </Tool>
      <Tool type="button" aria-label="Cloud list" $w={25}>
        <CloudIcon />
      </Tool>
      <Tool type="button" aria-label="Picture" $w={32}>
        <PictureIcon />
      </Tool>
      <Caret w={15} />
      <Tool type="button" aria-label="Houses" $w={32}>
        <HousesIcon />
      </Tool>
      <Caret w={13} />
      <Tool type="button" aria-label="Edit house" $w={24}>
        <HouseEditIcon />
      </Tool>
    </ToolStrip>
    <InfoBar>
      <InfoCell $w={81}>
        <InfoTitle />
        <InfoStack>
          <InfoLabelEnd>
            <label htmlFor="wb">o Wall base</label>
            <Arrow label="Wall base options" />
          </InfoLabelEnd>
          <TextField id="wb" $width={75} $height={18} />
        </InfoStack>
      </InfoCell>
      <InfoCell $w={185}>
        <InfoTitle>Reveal Depth:</InfoTitle>
        <InfoControls>
          <RevealIcon />
          <InfoStack>
            <InfoLabel>
              <label htmlFor="rwf">Reveal to Wall Face</label>
              <Arrow label="Reveal face options" />
            </InfoLabel>
            <TextField id="rwf" $height={18} defaultValue="30" />
          </InfoStack>
        </InfoControls>
      </InfoCell>
      <InfoCell>
        <InfoTitle>Flip:</InfoTitle>
        <FlipControls>
          <FlipIcon />
          <FlipBox type="button" aria-label="Flip" />
        </FlipControls>
      </InfoCell>
    </InfoBar>
    <TabBar />
    <Canvas aria-hidden="true">
      <path d="M198.500 0V943M0 52.500H2000M0 304.500H2000" stroke="#d4d4d4" />
      <path d="M282.500 32V182M282.500 255v1M282.500 315V500" stroke="#4a4a4a" />
    </Canvas>
  </AppWindow>
);

export default function App() {
  return (
    <>
      <GlobalStyle />
      <Screen>
        <Dialog>
          <TitleBar>
            <TitleButton type="button" aria-label="Help">?</TitleButton>
            <TitleButton type="button" aria-label="Close">
              <Icon w={12} h={12} stroke="#8a8a8a">
                <path d="M1 1l10 10M11 1L1 11" strokeWidth="1.200" />
              </Icon>
            </TitleButton>
          </TitleBar>
          <DialogBody>
            <SidebarPanel />
            <ColumnSplitter />
            <Content>
              <InfoRow>
                <strong>Vindu vertikal multi-rams</strong>
                <span>Selected: 1 Editable: 1</span>
              </InfoRow>
              <Section open icon={<PreviewIcon />}>PREVIEW AND POSITIONING</Section>
              <PreviewSection />
              <Section icon={<SettingsIcon />}>INNSTILLINGER VINDU</Section>
              <SectionGap />
              <Section icon={<PlanIcon />}>FLOOR PLAN AND SECTION</Section>
              <SectionGap />
              <Section open icon={<MarkerIcon />}>DIMENSION MARKER</Section>
              <MarkerSection />
              <Section icon={<TextStyleIcon />}>MARKER TEXT STYLE</Section>
              <SectionGap />
              <Section open icon={<SettingsIcon />}>INNSTILLINGER VINDUSSTEMPEL</Section>
              <StampSection />
              <SectionGap />
              <Section icon={<PageIcon />}>CLASSIFICATION AND PROPERTIES</Section>
              <Footer>
                <PushButton type="button">Cancel</PushButton>
                <PushButton type="button">OK</PushButton>
              </Footer>
            </Content>
          </DialogBody>
          <CollapseButton type="button" aria-label="Collapse library">
            <Tri dir="left" />
          </CollapseButton>
        </Dialog>
        <Background />
        <Palette>
          <PaletteTitle>Find &amp;</PaletteTitle>
          <PaletteText $height={35}>Criteria</PaletteText>
          <PaletteRule />
          <PaletteList>
            <PaletteItem>Criteria</PaletteItem>
            <PaletteItem $on>Elemen</PaletteItem>
          </PaletteList>
          <PaletteButton>
            <PushButton type="button" $width={76}>A</PushButton>
          </PaletteButton>
          <PaletteRule />
          <PaletteStatus>
            <PaletteText $height={20}>Selecte</PaletteText>
            <PaletteText $height={20}>Editabl</PaletteText>
          </PaletteStatus>
        </Palette>
        <Popup aria-label="Parameters">
          <Tree>
            {NODES.map((n) => (
              <li key={n.text}>
                <TreeButton type="button" $level={n.level} $on={n.on}>
                  {n.state ? <Chevron open={n.state === "open"} /> : <LeafSpacer />}
                  {n.text}
                </TreeButton>
              </li>
            ))}
          </Tree>
          <PopupScroll>
            <PopupThumb />
          </PopupScroll>
        </Popup>
      </Screen>
    </>
  );
}
